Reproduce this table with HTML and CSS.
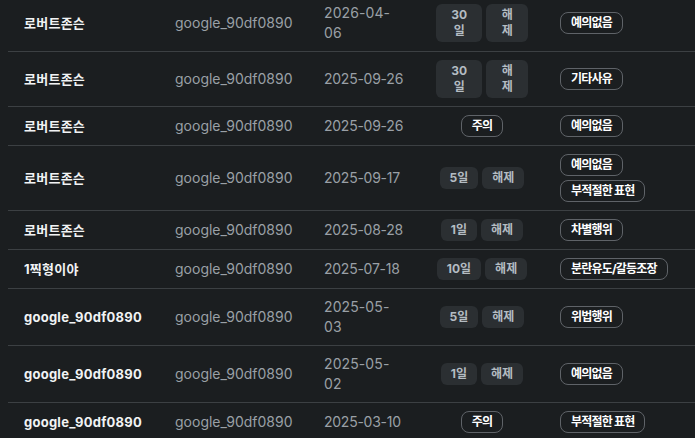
FILE: index.html
```html
<!DOCTYPE html>
<html lang="ko">
<head>
<meta charset="utf-8">
<link rel="stylesheet" href="styles.css">
</head>
<body>
<div class="scroller">
<table class="log">
  <colgroup>
    <col class="c-name"><col class="c-id"><col class="c-date"><col class="c-act"><col class="c-reason">
  </colgroup>
  <tbody>
    <tr>
      <td class="name">로버트존슨</td>
      <td class="uid">google_90df0890</td>
      <td class="date wrap">2026-04-06</td>
      <td class="act"><div class="btns"><span class="btn">30일</span><span class="btn">해제</span></div></td>
      <td class="reason"><div class="tags"><span class="tag">예의없음</span></div></td>
    </tr>
    <tr>
      <td class="name">로버트존슨</td>
      <td class="uid">google_90df0890</td>
      <td class="date">2025-09-26</td>
      <td class="act"><div class="btns"><span class="btn">30일</span><span class="btn">해제</span></div></td>
      <td class="reason"><div class="tags"><span class="tag">기타사유</span></div></td>
    </tr>
    <tr>
      <td class="name">로버트존슨</td>
      <td class="uid">google_90df0890</td>
      <td class="date">2025-09-26</td>
      <td class="act"><div class="btns"><span class="tag">주의</span></div></td>
      <td class="reason"><div class="tags"><span class="tag">예의없음</span></div></td>
    </tr>
    <tr>
      <td class="name">로버트존슨</td>
      <td class="uid">google_90df0890</td>
      <td class="date">2025-09-17</td>
      <td class="act"><div class="btns"><span class="btn">5일</span><span class="btn">해제</span></div></td>
      <td class="reason"><div class="tags"><span class="tag">예의없음</span><span class="tag">부적절한 표현</span></div></td>
    </tr>
    <tr>
      <td class="name">로버트존슨</td>
      <td class="uid">google_90df0890</td>
      <td class="date">2025-08-28</td>
      <td class="act"><div class="btns"><span class="btn">1일</span><span class="btn">해제</span></div></td>
      <td class="reason"><div class="tags"><span class="tag">차별행위</span></div></td>
    </tr>
    <tr>
      <td class="name">1찍형이야</td>
      <td class="uid">google_90df0890</td>
      <td class="date">2025-07-18</td>
      <td class="act"><div class="btns"><span class="btn">10일</span><span class="btn">해제</span></div></td>
      <td class="reason"><div class="tags"><span class="tag">분란유도/갈등조장</span></div></td>
    </tr>
    <tr>
      <td class="name">google_90df0890</td>
      <td class="uid">google_90df0890</td>
      <td class="date wrap">2025-05-03</td>
      <td class="act"><div class="btns"><span class="btn">5일</span><span class="btn">해제</span></div></td>
      <td class="reason"><div class="tags"><span class="tag">위법행위</span></div></td>
    </tr>
    <tr>
      <td class="name">google_90df0890</td>
      <td class="uid">google_90df0890</td>
      <td class="date wrap">2025-05-02</td>
      <td class="act"><div class="btns"><span class="btn">1일</span><span class="btn">해제</span></div></td>
      <td class="reason"><div class="tags"><span class="tag">예의없음</span></div></td>
    </tr>
    <tr>
      <td class="name">google_90df0890</td>
      <td class="uid">google_90df0890</td>
      <td class="date">2025-03-10</td>
      <td class="act"><div class="btns"><span class="tag">주의</span></div></td>
      <td class="reason"><div class="tags"><span class="tag">부적절한 표현</span></div></td>
    </tr>
  </tbody>
</table>
</div>
</body>
</html>
```

FILE: styles.css
```css
html, body {
  margin: 0;
  padding: 0;
  background: #1b1e20;
  height: 100%;
  overflow: hidden;
}
body {
  font-family: Inter, "Noto Sans CJK KR", sans-serif;
  color: #e8eaed;
}
.scroller {
  padding-left: 8px;
  margin-top: -5px;
}
.log {
  width: 100%;
  border-collapse: collapse;
  table-layout: fixed;
}
.c-name { width: 151px; }
.c-id { width: 149px; }
.c-date { width: 112px; }
.c-act { width: 124px; }
.log td {
  padding: 8px 16px;
  border-bottom: 1px solid #3c4043;
  vertical-align: middle;
  font-size: 14px;
  line-height: 20px;
}
.log td.name {
  font-weight: 700;
  font-size: 13px;
  letter-spacing: 0.25px;
  color: #f1f3f4;
}
.log td.uid, .log td.date {
  color: #9aa0a6;
}
.log td.date {
  white-space: nowrap;
  letter-spacing: -0.25px;
}
.log td.date.wrap {
  white-space: normal;
  letter-spacing: 0.1px;
}
.btns {
  display: flex;
  justify-content: center;
  gap: 4px;
}
.btn {
  background: #2b2f32;
  color: #b4bcc2;
  font-size: 12px;
  font-weight: 700;
  line-height: 16px;
  padding: 3px 10px;
  border-radius: 6px;
  text-align: center;
}
.tags {
  display: flex;
  flex-direction: column;
  align-items: flex-start;
  gap: 4px;
}
.tag {
  border: 1px solid #5f6368;
  border-radius: 8px;
  color: #ffffff;
  font-size: 12px;
  font-weight: 700;
  letter-spacing: -0.8px;
  line-height: 20px;
  padding: 0 10px;
  white-space: nowrap;
}
```
